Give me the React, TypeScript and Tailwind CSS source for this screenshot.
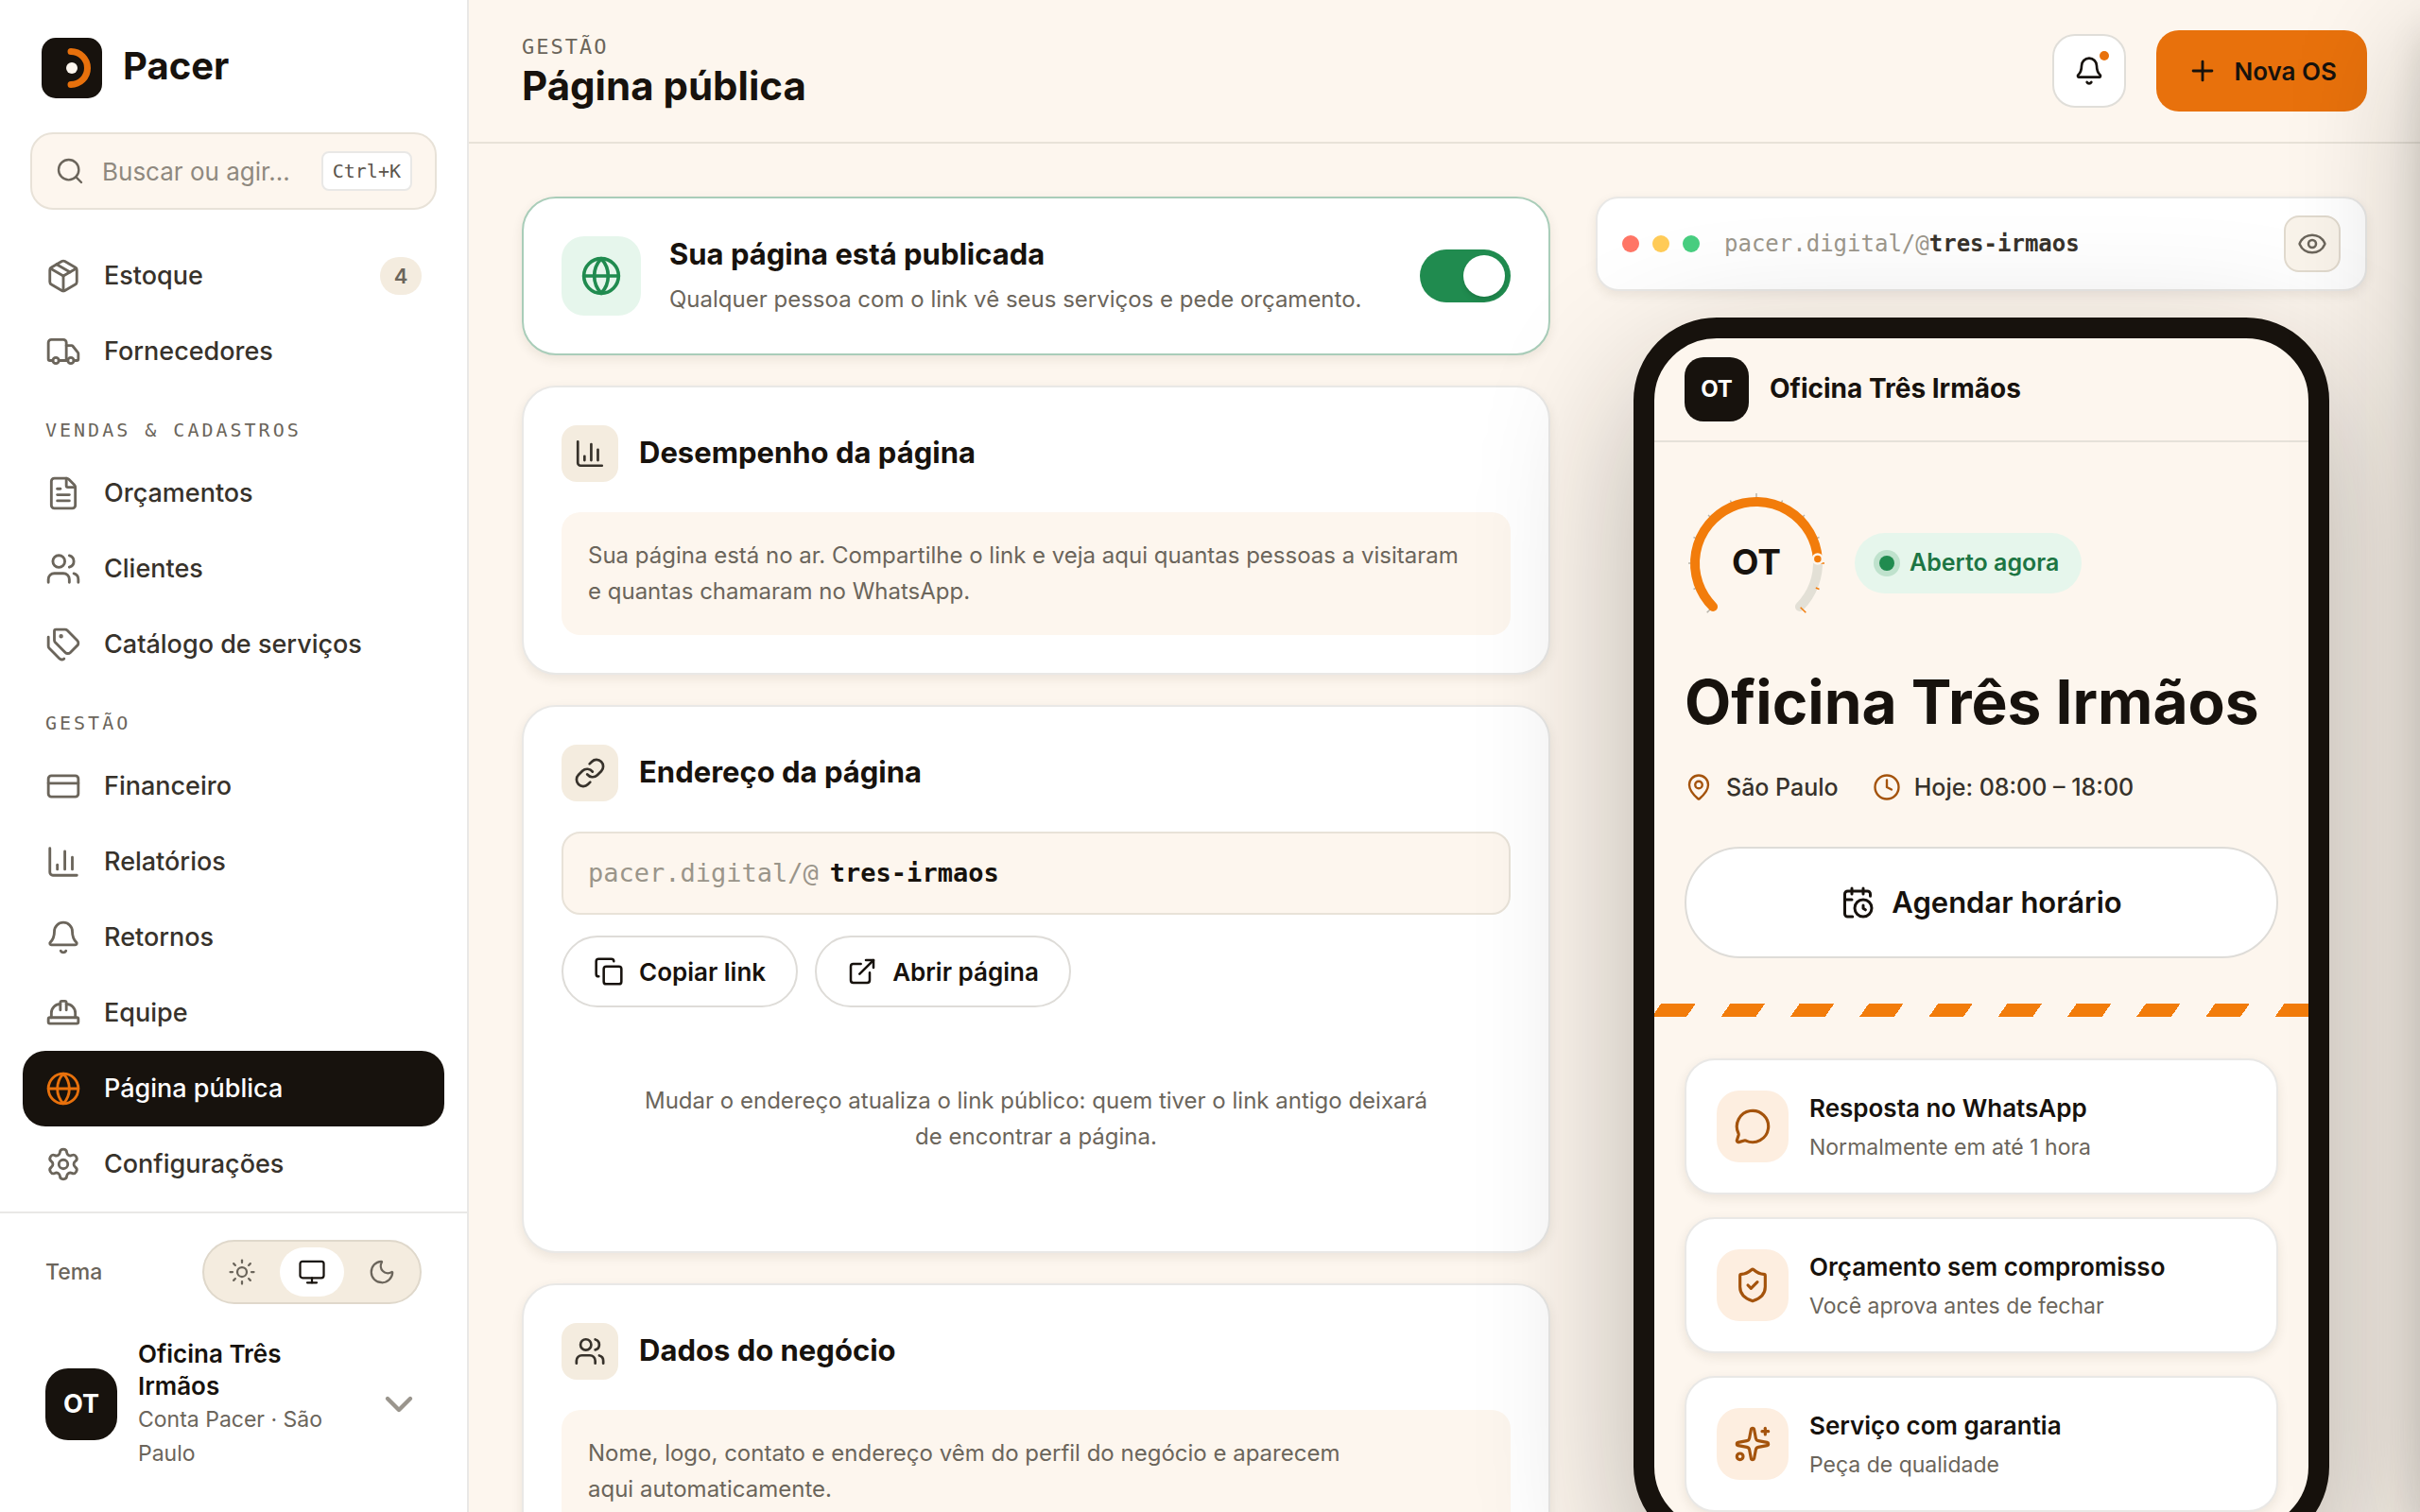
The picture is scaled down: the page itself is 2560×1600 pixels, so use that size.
import { useState } from 'react';
import {
  Bell,
  CalendarClock,
  ChartColumn,
  ChevronDown,
  Clock,
  Copy,
  CreditCard,
  ExternalLink,
  Eye,
  FileText,
  Globe,
  HardHat,
  Link,
  MapPin,
  MessageCircle,
  Monitor,
  Moon,
  Package,
  Plus,
  Search,
  Settings,
  ShieldCheck,
  Sparkles,
  Sun,
  Tags,
  Truck,
  Users,
  type LucideIcon,
} from 'lucide-react';

type NavItem = { label: string; icon: LucideIcon; badge?: number; active?: boolean };

const navGroups: { title?: string; items: NavItem[] }[] = [
  {
    items: [
      { label: 'Estoque', icon: Package, badge: 4 },
      { label: 'Fornecedores', icon: Truck },
    ],
  },
  {
    title: 'Vendas & cadastros',
    items: [
      { label: 'Orçamentos', icon: FileText },
      { label: 'Clientes', icon: Users },
      { label: 'Catálogo de serviços', icon: Tags },
    ],
  },
  {
    title: 'Gestão',
    items: [
      { label: 'Financeiro', icon: CreditCard },
      { label: 'Relatórios', icon: ChartColumn },
      { label: 'Retornos', icon: Bell },
      { label: 'Equipe', icon: HardHat },
      { label: 'Página pública', icon: Globe, active: true },
      { label: 'Configurações', icon: Settings },
    ],
  },
];

const themes = [
  { id: 'light', label: 'Claro', icon: Sun },
  { id: 'system', label: 'Sistema', icon: Monitor },
  { id: 'dark', label: 'Escuro', icon: Moon },
];

const perks = [
  { title: 'Resposta no WhatsApp', text: 'Normalmente em até 1 hora', icon: MessageCircle },
  { title: 'Orçamento sem compromisso', text: 'Você aprova antes de fechar', icon: ShieldCheck },
  { title: 'Serviço com garantia', text: 'Peça de qualidade', icon: Sparkles },
];

function Sidebar() {
  const [theme, setTheme] = useState('system');

  return (
    <aside className="w-[496px] shrink-0 flex flex-col bg-white border-r-2 border-[#e9e8e6]">
      <div className="flex items-center gap-[22px] px-11 pt-10">
        <svg viewBox="0 0 64 64" className="w-16 h-16" aria-hidden="true">
          <rect width="64" height="64" rx="15" fill="#17120d" />
          <path d="M31 14.5 A17.5 17.5 0 0 1 31 49.5" fill="none" stroke="#e8710c" strokeWidth="7" strokeLinecap="round" />
          <circle cx="32" cy="32" r="6" fill="#fdf6ee" />
        </svg>
        <span className="pb-1 text-[40px] leading-12 font-bold">Pacer</span>
      </div>

      <button
        type="button"
        className="mt-9 mx-8 h-[82px] px-6 flex items-center rounded-3xl border-2 border-[#e8e2d8] bg-[#fdf6ee] text-left"
      >
        <Search className="w-8 h-8 text-[#6b655b]" strokeWidth={1.8} />
        <span className="ml-[18px] flex-1 text-[26px] text-[#8f897f]">Buscar ou agir...</span>
        <kbd className="h-[42px] px-2.5 flex items-center rounded-lg border-2 border-[#e9e8e6] bg-white font-['DejaVu_Sans_Mono',monospace] text-xl text-[#5b554c]">
          Ctrl+K
        </kbd>
      </button>

      <nav className="mt-[30px] px-6 flex-1">
        {navGroups.map((group, i) => (
          <div key={i}>
            {group.title && (
              <h2 className="pt-[30px] pb-3.5 px-6 font-['DejaVu_Sans_Mono',monospace] text-xl leading-[26px] tracking-[3px] uppercase text-[#6b655b]">
                {group.title}
              </h2>
            )}
            {group.items.map(({ label, icon: Icon, badge, active }) => (
              <a
                key={label}
                href="#"
                aria-current={active ? 'page' : undefined}
                className={
                  active
                    ? 'h-20 px-6 flex items-center gap-6 rounded-3xl bg-[#17120d] text-white'
                    : 'h-20 px-6 flex items-center gap-6 rounded-3xl text-[#37322b]'
                }
              >
                <Icon className={active ? 'w-[38px] h-[38px] text-[#e8710c]' : 'w-[38px] h-[38px] text-[#6b655b]'} strokeWidth={1.8} />
                <span className="flex-1 text-[27px] font-medium">{label}</span>
                {badge && (
                  <span className="w-11 h-10 flex items-center justify-center rounded-full bg-[#f4ecdf] text-[22px] font-semibold text-[#6b655b]">
                    {badge}
                  </span>
                )}
              </a>
            ))}
          </div>
        ))}
      </nav>

      <div className="border-t-2 border-[#e9e8e6] h-[318px] px-12 pt-7">
        <div className="flex items-center justify-between">
          <span className="text-[23px] font-medium text-[#6b655b]">Tema</span>
          <div className="h-[68px] w-[232px] p-1.5 flex items-center justify-between rounded-full border-2 border-[#dfd8cb] bg-[#f4ecdf]">
            {themes.map(({ id, label, icon: Icon }) => (
              <button
                key={id}
                type="button"
                aria-label={label}
                onClick={() => setTheme(id)}
                className={
                  theme === id
                    ? 'w-[68px] h-[52px] flex items-center justify-center rounded-full bg-white text-[#17120d]'
                    : 'w-[68px] h-[52px] flex items-center justify-center rounded-full text-[#6b655b]'
                }
              >
                <Icon className="w-[30px] h-[30px]" strokeWidth={1.8} />
              </button>
            ))}
          </div>
        </div>

        <button type="button" className="mt-9 w-full flex items-center text-left">
          <span className="w-[76px] h-[76px] shrink-0 flex items-center justify-center rounded-3xl bg-[#17120d] text-[27px] font-bold text-white">
            OT
          </span>
          <span className="ml-[22px] w-[216px] flex flex-col">
            <span className="text-[26px] leading-[34px] font-semibold">Oficina Três Irmãos</span>
            <span className="text-[23px] leading-9 text-[#6b655b]">Conta Pacer · São Paulo</span>
          </span>
          <ChevronDown className="ml-auto w-12 h-12 text-[#9a958d]" strokeWidth={2.2} />
        </button>
      </div>
    </aside>
  );
}

function Header() {
  return (
    <header className="h-[152px] shrink-0 px-14 flex items-center justify-between border-b-2 border-[#e8e2d8]">
      <div className="pt-1">
        <p className="font-['DejaVu_Sans_Mono',monospace] text-[22px] leading-7 tracking-[2px] uppercase text-[#6b655b]">Gestão</p>
        <h1 className="text-[42px] leading-[54px] font-bold">Página pública</h1>
      </div>
      <div className="flex items-center gap-8">
        <button
          type="button"
          aria-label="Notificações"
          className="relative w-[78px] h-[78px] flex items-center justify-center rounded-3xl border-2 border-[#e0ded9] bg-white"
        >
          <Bell className="w-8 h-8" strokeWidth={2} />
          <span className="absolute top-4 right-4 w-2.5 h-2.5 rounded-full bg-[#e8710c]" />
        </button>
        <button type="button" className="h-[86px] px-8 flex items-center gap-4 rounded-3xl bg-[#e8710c] text-[26px] font-semibold">
          <Plus className="w-[34px] h-[34px]" strokeWidth={2} />
          Nova OS
        </button>
      </div>
    </header>
  );
}

function CardTitle({ icon: Icon, children }: { icon: LucideIcon; children: string }) {
  return (
    <div className="flex items-center gap-[22px]">
      <span className="w-[60px] h-[60px] flex items-center justify-center rounded-2xl bg-[#f4ecdf] text-[#37322b]">
        <Icon className="w-[34px] h-[34px]" strokeWidth={1.9} />
      </span>
      <h2 className="pb-0.5 text-[31px] leading-10 font-bold">{children}</h2>
    </div>
  );
}

const cardClass = 'p-10 rounded-[36px] border-2 border-[#e9e8e6] bg-white shadow-[0_4px_12px_rgba(60,45,20,0.09)]';

function Editor() {
  const [published, setPublished] = useState(true);

  return (
    <div className="flex flex-col gap-8">
      <section className="p-10 flex items-center rounded-[36px] border-2 border-[#a9cdb9] bg-white shadow-[0_4px_12px_rgba(60,45,20,0.09)]">
        <span className="w-[84px] h-[84px] flex items-center justify-center rounded-3xl bg-[#e6f6ec] text-[#208b4f]">
          <Globe className="w-11 h-11" strokeWidth={2} />
        </span>
        <div className="ml-[30px] flex-1">
          <h2 className="text-[31px] leading-[38px] font-bold">Sua página está publicada</h2>
          <p className="mt-3 text-2xl leading-[34px] text-[#6b655b]">
            Qualquer pessoa com o link vê seus serviços e pede orçamento.
          </p>
        </div>
        <label className="relative cursor-pointer">
          <input
            type="checkbox"
            aria-label="Publicar página"
            checked={published}
            onChange={e => setPublished(e.target.checked)}
            className="peer block appearance-none w-24 h-14 rounded-full bg-[#cfc8bb] checked:bg-[#208b4f]"
          />
          <span className="absolute top-1.5 left-1.5 peer-checked:left-[46px] w-11 h-11 rounded-full bg-white shadow-md" />
        </label>
      </section>

      <section className={cardClass}>
        <CardTitle icon={ChartColumn}>Desempenho da página</CardTitle>
        <p className="mt-8 pl-7 pr-10 py-[27px] rounded-[20px] bg-[#fdf6ee] text-2xl leading-[38px] text-[#6b655b]">
          Sua página está no ar. Compartilhe o link e veja aqui quantas pessoas a visitaram e quantas chamaram no WhatsApp.
        </p>
      </section>

      <section className={cardClass}>
        <CardTitle icon={Link}>Endereço da página</CardTitle>
        <label className="mt-8 h-[88px] px-[26px] flex items-center gap-3 rounded-[20px] border-2 border-[#e8e2d8] bg-[#fdf6ee] font-['DejaVu_Sans_Mono',monospace] text-[27px]">
          <span className="text-[#9a958a]">pacer.digital/@</span>
          <input type="text" defaultValue="tres-irmaos" className="flex-1 min-w-0 bg-transparent font-bold outline-none" />
        </label>
        <div className="mt-[22px] flex gap-[18px]">
          <button type="button" className="h-[76px] px-8 flex items-center gap-4 rounded-full border-2 border-[#dedcd8] text-[26px] font-semibold">
            <Copy className="w-8 h-8" strokeWidth={1.9} />
            Copiar link
          </button>
          <button type="button" className="h-[76px] px-8 flex items-center gap-4 rounded-full border-2 border-[#dedcd8] text-[26px] font-semibold">
            <ExternalLink className="w-8 h-8" strokeWidth={1.9} />
            Abrir página
          </button>
        </div>
        <p className="mx-auto max-w-[860px] pt-20 pb-[62px] text-center text-2xl leading-[38px] text-[#6b655b]">
          Mudar o endereço atualiza o link público: quem tiver o link antigo deixará de encontrar a página.
        </p>
      </section>

      <section className={cardClass}>
        <CardTitle icon={Users}>Dados do negócio</CardTitle>
        <p className="mt-8 pl-7 pr-40 py-[27px] rounded-[20px] bg-[#fdf6ee] text-2xl leading-[38px] text-[#6b655b]">
          Nome, logo, contato e endereço vêm do perfil do negócio e aparecem aqui automaticamente.
        </p>
      </section>
    </div>
  );
}

// 270° dial centred on (76, 76), starting at the lower left
function polar(radius: number, angle: number) {
  const rad = (angle * Math.PI) / 180;
  return [76 + radius * Math.cos(rad), 76 + radius * Math.sin(rad)];
}

function arc(from: number, to: number) {
  const [x1, y1] = polar(65, from);
  const [x2, y2] = polar(65, to);
  return `M${x1} ${y1} A65 65 0 ${to - from > 180 ? 1 : 0} 1 ${x2} ${y2}`;
}

function Dial() {
  const end = 356;
  const [dotX, dotY] = polar(65, end);
  const ticks = Array.from({ length: 13 }, (_, i) => {
    const angle = 135 + i * 22.5;
    const major = i % 6 === 0;
    const [x1, y1] = polar(major ? 66 : 68, angle);
    const [x2, y2] = polar(major ? 74 : 72, angle);
    return { x1, y1, x2, y2, late: angle >= 360 };
  });

  return (
    <svg viewBox="0 0 152 152" className="w-[152px] h-[152px]" aria-hidden="true">
      {ticks.filter(t => !t.late).map((t, i) => (
        <line key={i} x1={t.x1} y1={t.y1} x2={t.x2} y2={t.y2} stroke="#b9b4aa" strokeWidth="1.5" />
      ))}
      <path d={arc(end, 405)} fill="none" stroke="#e3e0d6" strokeWidth="10" strokeLinecap="round" />
      <path d={arc(135, end)} fill="none" stroke="#f27c0b" strokeWidth="10" strokeLinecap="round" />
      {ticks.filter(t => t.late).map((t, i) => (
        <line key={i} x1={t.x1} y1={t.y1} x2={t.x2} y2={t.y2} stroke="#f27c0b" strokeWidth="1.5" />
      ))}
      <circle cx={dotX} cy={dotY} r="5" fill="#f27c0b" stroke="#fdf6ee" strokeWidth="2.5" />
      <text x="76" y="88" textAnchor="middle" fontSize="37" fontWeight="700" fill="#17120d">OT</text>
    </svg>
  );
}

function Preview() {
  return (
    <div>
      <div className="h-[100px] px-[26px] flex items-center rounded-3xl border-2 border-[#e9e8e6] bg-white shadow-[0_4px_12px_rgba(60,45,20,0.09)]">
        <div className="flex gap-3.5">
          <span className="w-[18px] h-[18px] rounded-full bg-[#ff7565]" />
          <span className="w-[18px] h-[18px] rounded-full bg-[#ffcb57]" />
          <span className="w-[18px] h-[18px] rounded-full bg-[#47cd7f]" />
        </div>
        <p className="ml-[26px] flex-1 font-['DejaVu_Sans_Mono',monospace] text-2xl text-[#9a958a]">
          pacer.digital/@<b className="text-[#37322b]">tres-irmaos</b>
        </p>
        <button type="button" aria-label="Ver página" className="w-[60px] h-[60px] flex items-center justify-center rounded-2xl border-2 border-[#e0d9cd] bg-[#f9f3ea] text-[#6b655b]">
          <Eye className="w-8 h-8" strokeWidth={1.9} />
        </button>
      </div>

      <div className="mt-7 mx-auto w-[736px] h-[1304px] rounded-[88px] border-[22px] border-[#17120d] bg-[#fdf6ee] overflow-hidden shadow-[0_60px_160px_rgba(22,20,14,0.3)]">
        <div className="px-8 py-5 flex items-center gap-[22px] border-b-2 border-[#e6e1d9]">
          <span className="w-[68px] h-[68px] flex items-center justify-center rounded-[20px] bg-[#17120d] text-2xl font-bold text-white">OT</span>
          <span className="pb-0.5 text-[28px] font-bold">Oficina Três Irmãos</span>
        </div>

        <div className="px-8 pt-[52px]">
          <div className="flex items-center gap-7">
            <Dial />
            <span className="h-16 pl-5 pr-6 flex items-center gap-2.5 rounded-full bg-[#e6f6ec] text-[25px] font-semibold text-[#1c7543]">
              <span className="w-7 h-7 flex items-center justify-center rounded-full bg-[#bfe2cd]">
                <span className="w-4 h-4 rounded-full bg-[#208b4f]" />
              </span>
              Aberto agora
            </span>
          </div>
          <h2 className="mt-9 text-[64px] leading-[70px] font-bold whitespace-nowrap">Oficina Três Irmãos</h2>
          <div className="mt-9 flex items-center gap-9 text-[25px] leading-[38px] font-medium text-[#37322b]">
            <span className="flex items-center gap-3.5">
              <MapPin className="w-[30px] h-[30px] text-[#a4530c]" strokeWidth={1.9} />
              São Paulo
            </span>
            <span className="flex items-center gap-3.5">
              <Clock className="w-[30px] h-[30px] text-[#a4530c]" strokeWidth={1.9} />
              Hoje: 08:00 – 18:00
            </span>
          </div>
          <button type="button" className="mt-11 w-full h-[118px] flex items-center justify-center gap-[18px] rounded-full border-2 border-[#dedcd8] bg-white text-[31px] font-semibold">
            <CalendarClock className="w-9 h-9" strokeWidth={2} />
            Agendar horário
          </button>
        </div>

        <div className="mt-12 h-3.5 bg-[repeating-linear-gradient(-55deg,#f27c0b_0,#f27c0b_29px,transparent_29px,transparent_59px,#f27c0b_59px,#f27c0b_60px)]" />

        <ul className="mt-11 px-8 flex flex-col gap-6">
          {perks.map(({ title, text, icon: Icon }) => (
            <li key={title} className="h-36 px-8 flex items-center gap-[22px] rounded-[32px] border-2 border-[#e9e8e6] bg-white shadow-[0_4px_12px_rgba(60,45,20,0.09)]">
              <span className="w-[76px] h-[76px] flex items-center justify-center rounded-3xl bg-[#fdeee0] text-[#a4530c]">
                <Icon className="w-10 h-10" strokeWidth={1.9} />
              </span>
              <div className="pt-1">
                <h3 className="text-[26px] leading-9 font-semibold">{title}</h3>
                <p className="mt-1 text-[23px] leading-[38px] text-[#6b655b]">{text}</p>
              </div>
            </li>
          ))}
        </ul>
      </div>
    </div>
  );
}

export default function App() {
  return (
    <div className="h-screen flex overflow-hidden bg-[#fdf6ee] font-[Inter,sans-serif] text-[#17120d]">
      <Sidebar />
      <div className="flex-1 min-w-0 flex flex-col">
        <Header />
        <main className="flex-1 min-h-0 overflow-hidden px-14 pt-14 grid grid-cols-[4fr_3fr] items-start gap-12">
          <Editor />
          <Preview />
        </main>
      </div>

      <div className="fixed top-0 bottom-0 left-full w-[800px] pointer-events-none shadow-[0_48px_128px_rgba(22,20,14,0.24),0_32px_40px_rgba(22,20,14,0.12)]" />
    </div>
  );
}
